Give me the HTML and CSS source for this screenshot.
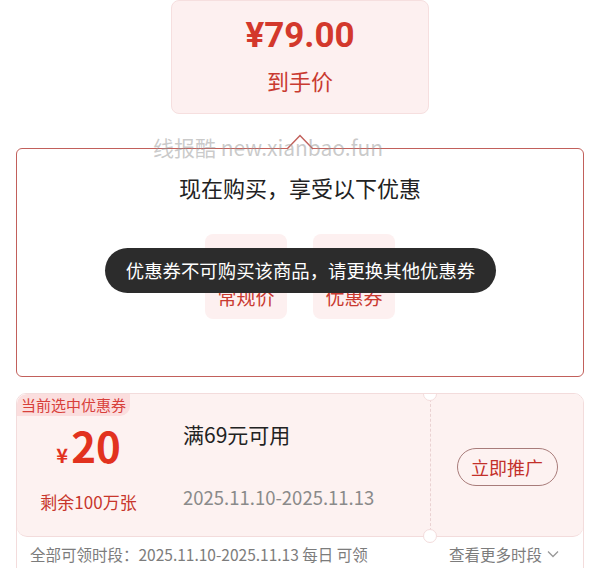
FILE: index.html
```html
<!DOCTYPE html>
<html lang="zh">
<head>
<meta charset="utf-8">
<link rel="stylesheet" href="styles.css">
</head>
<body>
<div class="page">
  <div class="price-card">
    <div class="price">¥79.00</div>
    <div class="price-label">到手价</div>
  </div>

  <div class="offer-box">
    <svg class="caret" width="26" height="16" viewBox="0 0 26 16"><polygon points="0,15.5 13,1.5 26,15.5" fill="#fff"/><polyline points="0,15 13,1.5 26,15" fill="none" stroke="#c2605b" stroke-width="1.5"/></svg>
    <div class="offer-title">现在购买，享受以下优惠</div>
    <div class="options">
      <div class="option"><span class="opt-label">常规价</span></div>
      <div class="option"><span class="opt-label">优惠券</span></div>
    </div>
  </div>

  <div class="coupon">
    <div class="coupon-main">
      <span class="tag">当前选中优惠券</span>
      <div class="c-left">
        <div class="amount"><span class="yen">¥</span><span class="num">20</span></div>
        <div class="remain">剩余100万张</div>
      </div>
      <div class="c-mid">
        <div class="cond">满69元可用</div>
        <div class="dates">2025.11.10-2025.11.13</div>
      </div>
      <div class="c-right">
        <button class="promo">立即推广</button>
      </div>
    </div>
    <div class="coupon-foot">
      <span>全部可领时段：2025.11.10-2025.11.13 每日 可领</span>
      <span class="more">查看更多时段 <svg width="12" height="8" viewBox="0 0 12 8"><polyline points="1,1.5 6,6.5 11,1.5" fill="none" stroke="#999" stroke-width="1.3"/></svg></span>
    </div>
  </div>

  <div class="watermark">线报酷 new.xianbao.fun</div>
  <div class="toast">优惠券不可购买该商品，请更换其他优惠券</div>
</div>
</body>
</html>
```

FILE: styles.css
```css
* { box-sizing: border-box; }
body {
  margin: 0;
  background: #fff;
  font-family: "Noto Sans CJK SC", "Noto Sans", sans-serif;
}
.page {
  position: relative;
  width: 600px;
  height: 568px;
  overflow: hidden;
}
.price-card {
  width: 258px;
  height: 114px;
  margin: 0 auto;
  background: #fdf0f0;
  border: 1px solid #f6dfdf;
  border-radius: 8px;
  display: flex;
  flex-direction: column;
  align-items: center;
  padding-top: 12px;
}
.price {
  font-family: Roboto, "Noto Sans CJK SC", sans-serif;
  font-size: 35px;
  font-weight: 700;
  line-height: 46px;
  color: #d3382c;
}
.price-label {
  margin-top: 6px;
  font-size: 22px;
  line-height: 30px;
  color: #c93a30;
}
.offer-box {
  position: relative;
  margin: 34px 16px 0;
  height: 229px;
  border: 1.5px solid #c2605b;
  border-radius: 6px;
  display: flex;
  flex-direction: column;
  align-items: center;
}
.caret {
  position: absolute;
  top: -15.5px;
  left: 50%;
  transform: translateX(-50%);
}
.offer-title {
  margin-top: 22px;
  font-size: 22px;
  line-height: 32px;
  color: #222;
}
.options {
  margin-top: 31px;
  display: flex;
  gap: 26px;
}
.option {
  width: 82px;
  height: 85px;
  background: #fdf0f0;
  border-radius: 8px;
  display: flex;
  flex-direction: column;
  align-items: center;
  justify-content: flex-end;
  padding-bottom: 8px;
  color: #c93a30;
}
.opt-label { font-size: 19px; line-height: 28px; }

.coupon {
  margin: 16px 16px 0;
  height: 200px;
  border: 1px solid #f3dcdc;
  border-radius: 10px;
  overflow: hidden;
}
.coupon-main {
  position: relative;
  height: 143px;
  background: #fdf2f1;
  border-bottom: 1px solid #f3dcdc;
  border-radius: 0 0 10px 10px;
  display: flex;
}
.tag {
  position: absolute;
  left: 0;
  top: 0;
  padding: 0 4px;
  height: 22px;
  line-height: 22px;
  font-size: 15px;
  color: #d8403a;
  background: #fbdede;
  border-radius: 10px 0 10px 0;
}
.c-left {
  width: 143px;
  display: flex;
  flex-direction: column;
  align-items: center;
  padding-top: 29px;
}
.amount { color: #e2321f; line-height: 44px; }
.yen { font-size: 20px; font-weight: 700; margin-right: 3px; }
.num { font-size: 42px; font-weight: 700; }
.remain {
  margin-top: 12px;
  font-size: 17px;
  line-height: 24px;
  color: #c8362c;
}
.c-mid {
  width: 271px;
  padding-left: 23px;
  padding-top: 25px;
  border-right: 1.5px dashed #ead2d2;
  position: relative;
}
.c-mid::before, .c-mid::after {
  content: "";
  position: absolute;
  right: -7px;
  width: 12px;
  height: 12px;
  border-radius: 50%;
  background: #fff;
  border: 1px solid #f3dcdc;
}
.c-mid::before { top: -7px; }
.c-mid::after { bottom: -7px; }
.cond {
  font-size: 21px;
  line-height: 30px;
  color: #222;
}
.dates {
  margin-top: 35px;
  font-size: 18.5px;
  line-height: 26px;
  color: #8a8a8a;
}
.c-right {
  flex: 1;
  display: flex;
  justify-content: center;
  align-items: center;
  padding-top: 4px;
}
.promo {
  width: 101px;
  height: 38px;
  border: 1px solid #a87c7a;
  border-radius: 19px;
  background: transparent;
  font-family: inherit;
  font-size: 18px;
  color: #c3302a;
  padding: 0;
}
.coupon-foot {
  display: flex;
  justify-content: space-between;
  align-items: center;
  height: 34px;
  padding: 0 24px 0 13px;
  font-size: 15.5px;
  color: #7c7c7c;
}
.more { display: flex; align-items: center; gap: 5px; }

.watermark {
  position: absolute;
  left: 153px;
  top: 133px;
  font-size: 21px;
  line-height: 28px;
  color: rgba(150, 150, 150, 0.5);
  pointer-events: none;
}
.toast {
  position: absolute;
  left: 105px;
  top: 248px;
  width: 391px;
  height: 45px;
  border-radius: 23px;
  background: #2c2c2c;
  color: #fff;
  font-size: 18.4px;
  line-height: 45px;
  text-align: center;
}
```
